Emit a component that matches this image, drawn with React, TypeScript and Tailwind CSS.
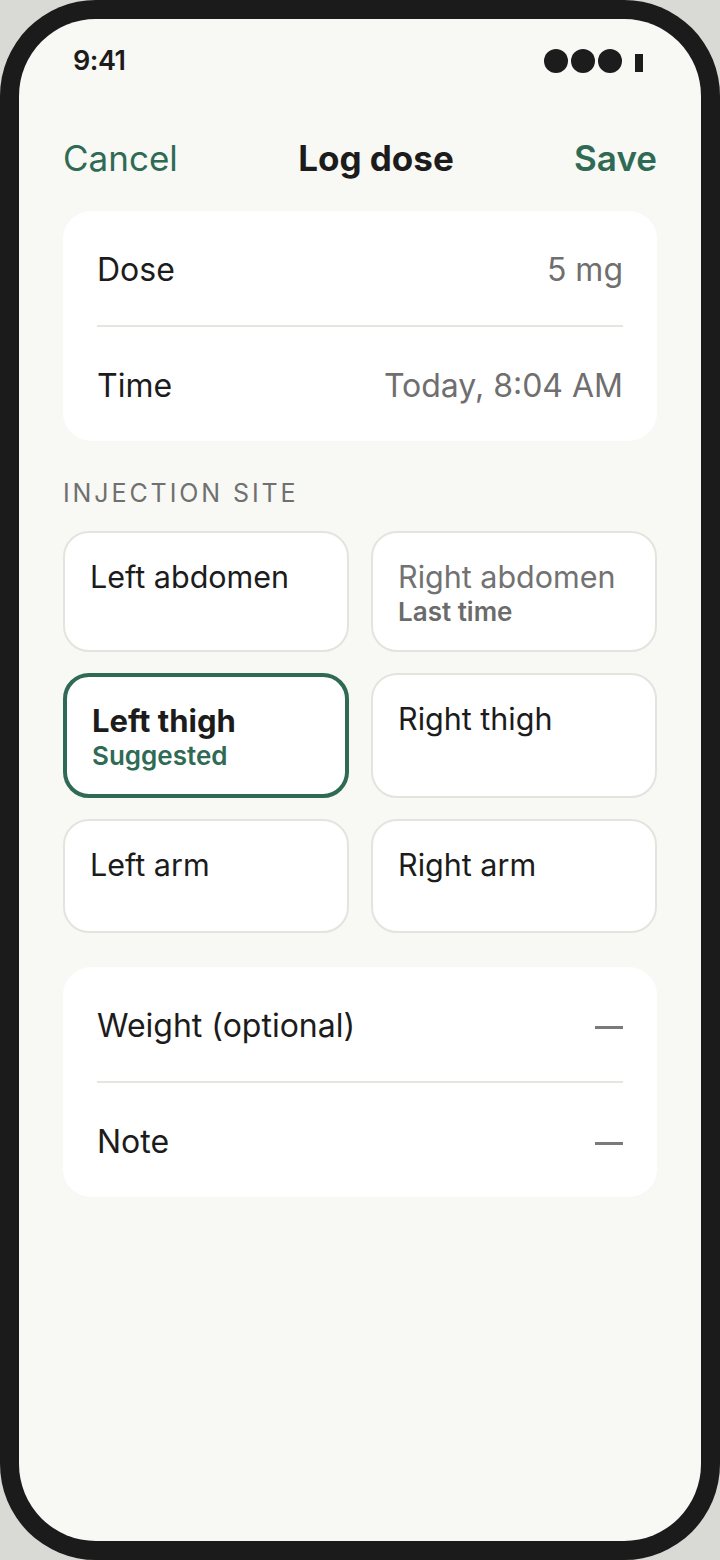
import React from "react";

const font = { fontFamily: "Inter, 'Noto Sans', 'Liberation Sans', sans-serif" };

type Site = {
    name: string;
    sub?: string;
    state?: "selected" | "last";
};

const sites: Site[] = [
    {name: "Left abdomen"},
    {name: "Right abdomen", sub: "Last time", state: "last"},
    {name: "Left thigh", sub: "Suggested", state: "selected"},
    {name: "Right thigh"},
    {name: "Left arm"},
    {name: "Right arm"},
];

function Row({label, value, dash}: {label: string; value?: string; dash?: boolean}) {
    return (
        <div className="h-[114px] pt-[4px] flex items-center justify-between">
            <span className="text-[32px] text-[#1c1c1c]">{label}</span>
            {dash ? (
                <span className="w-[28px] h-[3px] bg-[#7a7a7a] mt-[2px]"/>
            ) : (
                <span className="text-[32px] text-[#6f6f6f]">{value}</span>
            )}
        </div>
    );
}

function Divider() {
    return <div className="h-[2px] bg-[#e6e6e1]"/>;
}

function SiteTile({site}: {site: Site}) {
    const selected = site.state === "selected";
    const last = site.state === "last";

    return (
        <div
            className={
                selected
                    ? "min-h-[114px] rounded-[26px] bg-white border-[4px] border-[#2f6b54] px-[25px] pt-[25px] pb-[22px]"
                    : "min-h-[114px] rounded-[26px] bg-white border-2 border-[#e4e4df] px-[25px] pt-[25px] pb-[22px]"
            }
        >
            <div
                className={
                    selected
                        ? "text-[31px] leading-[38px] font-bold text-[#1c1c1c]"
                        : last
                            ? "text-[30.5px] leading-[38px] text-[#727272]"
                            : "text-[30.5px] leading-[38px] text-[#1c1c1c]"
                }
            >
                {site.name}
            </div>
            {site.sub && (
                <div
                    className={
                        selected
                            ? "text-[26px] leading-[32px] font-semibold text-[#2f6b54]"
                            : "text-[26px] leading-[32px] font-semibold text-[#6b6b6b]"
                    }
                >
                    {site.sub}
                </div>
            )}
        </div>
    );
}

export default function App() {
    return (
        <div className="w-[720px] h-[1560px] bg-[#d9d9d5]" style={font}>
            <div className="h-full rounded-[96px] bg-[#1b1b1b] p-[19px]">
                <div className="h-full rounded-[77px] bg-[#f8f8f4] px-[44px] overflow-hidden">
                    {/* status bar */}
                    <div className="mt-[28px] h-[28px] flex items-center justify-between pl-[10px] pr-[14px]">
                        <span className="text-[27px] font-semibold text-[#1c1c1c] tracking-[-0.5px]">9:41</span>
                        <div className="flex items-center gap-[3px]">
                            <span className="w-[24px] h-[24px] rounded-full bg-[#1c1c1c]"/>
                            <span className="w-[24px] h-[24px] rounded-full bg-[#1c1c1c]"/>
                            <span className="w-[24px] h-[24px] rounded-full bg-[#1c1c1c]"/>
                            <span className="w-[8px] h-[18px] bg-[#1c1c1c] ml-[10px] mt-[4px]"/>
                        </div>
                    </div>

                    {/* nav */}
                    <div className="mt-[53px] h-[60px] flex items-center justify-between">
                        <span className="text-[35px] text-[#2f6b54]">Cancel</span>
                        <span className="text-[35px] font-bold text-[#1c1c1c]">Log dose</span>
                        <span className="text-[35px] font-semibold text-[#2f6b54]">Save</span>
                    </div>

                    <div className="mt-[23px] rounded-[28px] bg-white px-[34px]">
                        <Row label="Dose" value="5 mg"/>
                        <Divider/>
                        <Row label="Time" value="Today, 8:04 AM"/>
                    </div>

                    <div className="mt-[38px] h-[30px] flex items-center text-[25px] tracking-[2.9px] text-[#707070]">
                        INJECTION SITE
                    </div>

                    <div className="mt-[22px] grid grid-cols-2 gap-x-[22px] gap-y-[21px]">
                        {sites.map((s) => (
                            <SiteTile key={s.name} site={s}/>
                        ))}
                    </div>

                    <div className="mt-[34px] rounded-[28px] bg-white px-[34px]">
                        <Row label="Weight (optional)" dash/>
                        <Divider/>
                        <Row label="Note" dash/>
                    </div>
                </div>
            </div>
        </div>
    );
}
